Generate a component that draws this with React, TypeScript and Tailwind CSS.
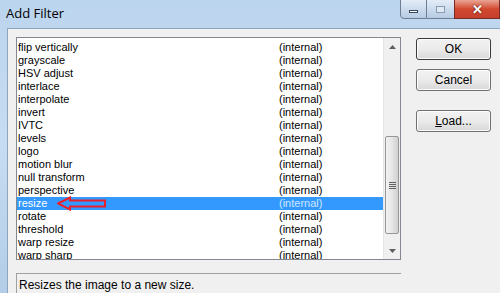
import React from "react";

const filters = [
  "flip vertically",
  "grayscale",
  "HSV adjust",
  "interlace",
  "interpolate",
  "invert",
  "IVTC",
  "levels",
  "logo",
  "motion blur",
  "null transform",
  "perspective",
  "resize",
  "rotate",
  "threshold",
  "warp resize",
  "warp sharp",
];

function WinButton({ children, primary }: { children: React.ReactNode; primary?: boolean }) {
  return (
    <button
      className={
        "h-[22px] w-[75px] rounded-[3px] border bg-gradient-to-b from-[#f2f2f2] via-[#ebebeb] to-[#d8d8d8] text-[12px] text-black " +
        (primary ? "border-[#3a3a3a] shadow-[inset_0_0_0_1px_#fcfcfc]" : "border-[#707070] shadow-[inset_0_0_0_1px_#fcfcfc]")
      }
    >
      {children}
    </button>
  );
}

function Scrollbar() {
  return (
    <div className="flex w-[17px] flex-col bg-[#f0f0f0] border-l border-[#e6e6e6]">
      <div className="flex h-[17px] items-center justify-center">
        <svg width="7" height="4" viewBox="0 0 7 4">
          <path d="M0 4 L3.5 0 L7 4 Z" fill="#606060" />
        </svg>
      </div>
      <div className="h-[81px]" />
      <div className="mx-[1px] flex h-[98px] items-center justify-center rounded-[2px] border border-[#979797] bg-gradient-to-r from-[#f2f2f2] via-[#e6e6e6] to-[#d0d0d0]">
        <div className="flex flex-col gap-[1px]">
          <div className="h-[1px] w-[7px] bg-[#606060]" />
          <div className="h-[1px] w-[7px] bg-[#606060]" />
          <div className="h-[1px] w-[7px] bg-[#606060]" />
          <div className="h-[1px] w-[7px] bg-[#606060]" />
        </div>
      </div>
      <div className="flex-1" />
      <div className="flex h-[17px] items-center justify-center">
        <svg width="7" height="4" viewBox="0 0 7 4">
          <path d="M0 0 L3.5 4 L7 0 Z" fill="#606060" />
        </svg>
      </div>
    </div>
  );
}

export default function App() {
  return (
    <div
      className="relative h-[293px] w-[500px] overflow-hidden bg-gradient-to-b from-[#bcd5ee] via-[#c6dcf1] to-[#b3cde8]"
      style={{ fontFamily: '"Liberation Sans", Arial, sans-serif' }}
    >
      {/* title bar */}
      <div className="flex h-[28px] items-start">
        <div
          className="pl-[6px] pt-[4px] text-[13px] text-black"
          style={{ fontFamily: '"Open Sans", "Noto Sans", sans-serif' }}
        >
          Add Filter
        </div>
        <div className="ml-auto mt-[-1px] flex h-[20px]">
          <div className="flex w-[27px] items-center justify-center rounded-bl-[4px] border border-[#6f7f93] bg-gradient-to-b from-[#e3edf8] to-[#b6cbe3]">
            <div className="mt-[4px] h-[3px] w-[9px] border border-[#3a4a5f] bg-white" />
          </div>
          <div className="flex w-[27px] items-center justify-center border-y border-[#6f7f93] bg-gradient-to-b from-[#e3edf8] to-[#b6cbe3]">
            <div className="h-[7px] w-[9px] border border-[#8a9bb0] bg-[#dfe9f4]" />
          </div>
          <div className="flex w-[46px] items-center justify-center border border-[#7a2b22] bg-gradient-to-b from-[#e8a394] via-[#d2482f] to-[#c4402c]">
            <span className="text-[13px] font-bold leading-none text-white" style={{ textShadow: "0 0 2px #3a1010" }}>
              ✕
            </span>
          </div>
        </div>
      </div>

      {/* frame + client area */}
      <div className="flex h-[265px] pl-[7px]">
        <div className="flex flex-1 border-l border-t border-[#8ea5c0] bg-[#f0f0f0] pl-[8px] pt-[8px]">
          <div className="flex w-[385px] flex-col">
            <div className="flex h-[223px] border border-[#828790] bg-white">
              <div className="flex-1 overflow-hidden pt-[3px] text-[11px] text-black">
                {filters.map((f) => {
                  const sel = f === "resize";
                  return (
                    <div
                      key={f}
                      className={"relative flex h-[13px] items-center leading-[13px] " + (sel ? "bg-[#3399ff] text-white" : "")}
                    >
                      <span className="w-[262px] pl-[1px]">{f}</span>
                      <span className={sel ? "text-[#cfe6ff]" : ""}>(internal)</span>
                      {sel && (
                        <svg className="absolute left-[40px] top-[-1px]" width="50" height="15" viewBox="0 0 50 15">
                          <path
                            d="M1 7.5 L13 1.5 L13 4.5 L48 4.5 L48 10.5 L13 10.5 L13 13.5 Z"
                            fill="none"
                            stroke="#e8202a"
                            strokeWidth="2"
                            strokeLinejoin="miter"
                          />
                        </svg>
                      )}
                    </div>
                  );
                })}
              </div>
              <Scrollbar />
            </div>
            <div className="mt-[13px] h-[40px] border-l border-t border-[#a0a0a0] bg-[#f0f0f0] pl-[2px] pt-[2px] text-[12px] text-black">
              Resizes the image to a new size.
            </div>
          </div>
          <div className="ml-[15px] flex flex-col pt-[1px]">
            <WinButton primary>OK</WinButton>
            <div className="mt-[7px]">
              <WinButton>Cancel</WinButton>
            </div>
            <div className="mt-[17px]">
              <WinButton>
                <span className="underline">L</span>oad...
              </WinButton>
            </div>
          </div>
        </div>
      </div>
    </div>
  );
}
